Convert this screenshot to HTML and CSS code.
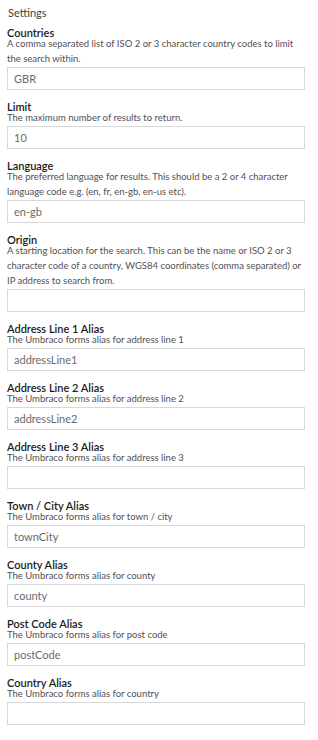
FILE: index.html
```html
<!DOCTYPE html>
<html>
<head>
    <title>Settings</title>
    <link rel="stylesheet" href="styles.css">
</head>
<body>
    <div class="settings">
        <h2 class="settings-title">Settings</h2>

        <div class="field">
            <label class="field-label" for="countries">Countries</label>
            <div class="field-desc">A comma separated list of ISO 2 or 3 character country codes to limit the search within.</div>
            <input type="text" id="countries" class="field-input" value="GBR">
        </div>

        <div class="field">
            <label class="field-label" for="limit">Limit</label>
            <div class="field-desc">The maximum number of results to return.</div>
            <input type="text" id="limit" class="field-input" value="10">
        </div>

        <div class="field">
            <label class="field-label" for="language">Language</label>
            <div class="field-desc">The preferred language for results. This should be a 2 or 4 character language code e.g. (en, fr, en-gb, en-us etc).</div>
            <input type="text" id="language" class="field-input" value="en-gb">
        </div>

        <div class="field">
            <label class="field-label" for="origin">Origin</label>
            <div class="field-desc">A starting location for the search. This can be the name or ISO 2 or 3 character code of a country, WGS84 coordinates (comma separated) or IP address to search from.</div>
            <input type="text" id="origin" class="field-input" value="">
        </div>

        <div class="field">
            <label class="field-label" for="addressLine1">Address Line 1 Alias</label>
            <div class="field-desc">The Umbraco forms alias for address line 1</div>
            <input type="text" id="addressLine1" class="field-input" value="addressLine1">
        </div>

        <div class="field">
            <label class="field-label" for="addressLine2">Address Line 2 Alias</label>
            <div class="field-desc">The Umbraco forms alias for address line 2</div>
            <input type="text" id="addressLine2" class="field-input" value="addressLine2">
        </div>

        <div class="field">
            <label class="field-label" for="addressLine3">Address Line 3 Alias</label>
            <div class="field-desc">The Umbraco forms alias for address line 3</div>
            <input type="text" id="addressLine3" class="field-input" value="">
        </div>

        <div class="field">
            <label class="field-label" for="townCity">Town / City Alias</label>
            <div class="field-desc">The Umbraco forms alias for town / city</div>
            <input type="text" id="townCity" class="field-input" value="townCity">
        </div>

        <div class="field">
            <label class="field-label" for="county">County Alias</label>
            <div class="field-desc">The Umbraco forms alias for county</div>
            <input type="text" id="county" class="field-input" value="county">
        </div>

        <div class="field">
            <label class="field-label" for="postCode">Post Code Alias</label>
            <div class="field-desc">The Umbraco forms alias for post code</div>
            <input type="text" id="postCode" class="field-input" value="postCode">
        </div>

        <div class="field">
            <label class="field-label" for="country">Country Alias</label>
            <div class="field-desc">The Umbraco forms alias for country</div>
            <input type="text" id="country" class="field-input" value="">
        </div>
    </div>
</body>
</html>
```

FILE: styles.css
```css
body {
    margin: 0;
    background-color: #fff;
    font-family: Lato, "Open Sans", sans-serif;
    color: #1b1b1b;
}

.settings {
    padding: 6px 13px 0 7px;
}

.settings-title {
    margin: 0 0 8px 1px;
    font-size: 11px;
    line-height: 13px;
    font-weight: normal;
    color: #444;
}

.field {
    display: flex;
    flex-direction: column;
    margin-bottom: 11px;
}

.field-label {
    font-size: 11px;
    line-height: 12px;
    font-weight: 600;
    color: #1b1b1b;
}

.field-desc {
    margin-top: -3px;
    font-size: 9.5px;
    line-height: 15px;
    color: #515054;
}

.field-input {
    box-sizing: border-box;
    width: 298px;
    height: 23px;
    margin: 1px 0 0;
    padding: 0 6px;
    border: 1px solid #d8d7d9;
    border-radius: 0;
    font-family: Lato, "Open Sans", sans-serif;
    font-size: 11px;
    color: #6b6b6b;
    background-color: #fff;
    outline: none;
}
```
